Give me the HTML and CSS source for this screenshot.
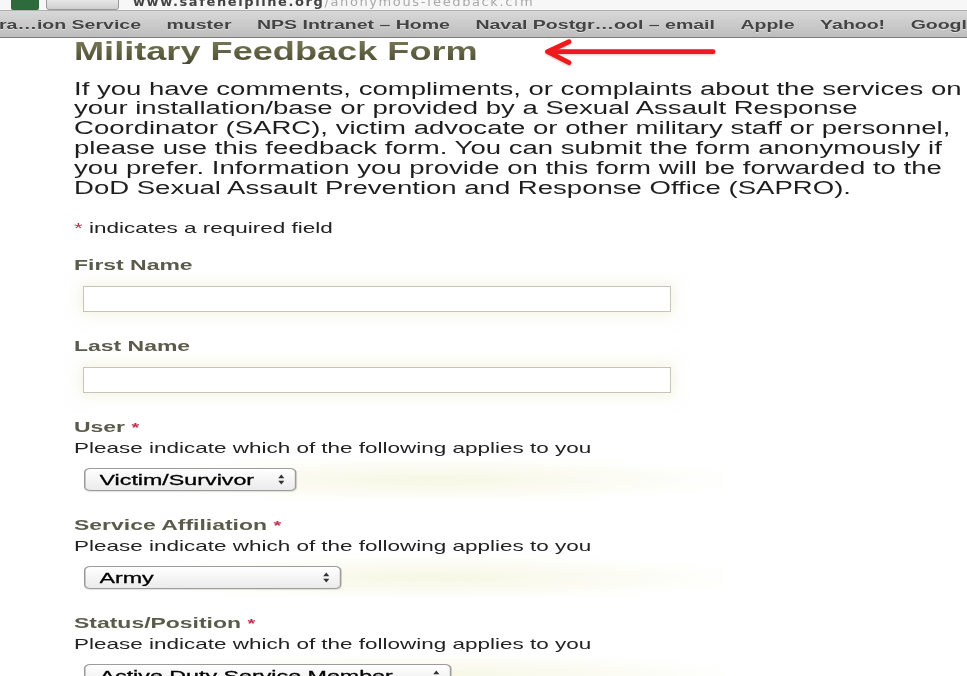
FILE: index.html
```html
<!DOCTYPE html>
<html lang="en">
<head>
<meta charset="utf-8">
<title>Military Feedback Form</title>
<link rel="stylesheet" href="styles.css">
</head>
<body>
  <header class="chrome">
    <div class="addr-strip">
      <span class="tab-icon"></span>
      <span class="nav-btns"></span>
      <span class="url"><b>www.safehelpline.org</b>/anonymous-feedback.cfm</span>
    </div>
    <nav class="bookmarks">
      <div class="bm-row">
        <span class="bm">ra…ion Service</span>
        <span class="bm">muster</span>
        <span class="bm">NPS Intranet – Home</span>
        <span class="bm">Naval Postgr…ool – email</span>
        <span class="bm">Apple</span>
        <span class="bm">Yahoo!</span>
        <span class="bm">Google</span>
      </div>
    </nav>
  </header>

  <main class="page">
    <div class="title-row">
      <h1 class="title">Military Feedback Form</h1>
      <svg class="pointer-arrow" viewBox="0 0 174 28" width="174" height="28" aria-hidden="true">
        <path d="M169 13.7 H5" stroke="#ee1a1d" stroke-width="4.8" stroke-linecap="round" fill="none"/>
        <path d="M25 3.7 L3.5 13.7 L25 24.7" stroke="#ee1a1d" stroke-width="4.8" stroke-linecap="round" stroke-linejoin="round" fill="none"/>
      </svg>
    </div>

    <p class="intro">If you have comments, compliments, or complaints about the services on<br>your installation/base or provided by a Sexual Assault Response<br>Coordinator (SARC), victim advocate or other military staff or personnel,<br>please use this feedback form. You can submit the form anonymously if<br>you prefer. Information you provide on this form will be forwarded to the<br>DoD Sexual Assault Prevention and Response Office (SAPRO).</p>

    <p class="note"><span class="req">*</span> indicates a required field</p>

    <form class="form">
      <div class="field">
        <label class="label" for="first-name">First Name</label>
        <input class="text-input" id="first-name" type="text">
      </div>

      <div class="field">
        <label class="label" for="last-name">Last Name</label>
        <input class="text-input" id="last-name" type="text">
      </div>

      <div class="field">
        <label class="label" for="user">User <span class="req req-small">*</span></label>
        <span class="hint">Please indicate which of the following applies to you</span>
        <div class="control">
          <span class="select-box">
            <select class="select select-user" id="user">
              <option>Victim/Survivor</option>
            </select>
            <svg class="updown" viewBox="0 0 7 11" width="4.6" height="11" preserveAspectRatio="none" aria-hidden="true"><path d="M0.5 4.3 L3.5 0.5 L6.5 4.3 Z M0.5 6.7 L3.5 10.5 L6.5 6.7 Z" fill="#333"/></svg>
          </span>
        </div>
      </div>

      <div class="field">
        <label class="label" for="affiliation">Service Affiliation <span class="req req-small">*</span></label>
        <span class="hint">Please indicate which of the following applies to you</span>
        <div class="control">
          <span class="select-box">
            <select class="select select-affiliation" id="affiliation">
              <option>Army</option>
            </select>
            <svg class="updown" viewBox="0 0 7 11" width="4.6" height="11" preserveAspectRatio="none" aria-hidden="true"><path d="M0.5 4.3 L3.5 0.5 L6.5 4.3 Z M0.5 6.7 L3.5 10.5 L6.5 6.7 Z" fill="#333"/></svg>
          </span>
        </div>
      </div>

      <div class="field">
        <label class="label" for="status">Status/Position <span class="req req-small">*</span></label>
        <span class="hint">Please indicate which of the following applies to you</span>
        <div class="control">
          <span class="select-box">
            <select class="select select-status" id="status">
              <option>Active Duty Service Member</option>
            </select>
            <svg class="updown" viewBox="0 0 7 11" width="4.6" height="11" preserveAspectRatio="none" aria-hidden="true"><path d="M0.5 4.3 L3.5 0.5 L6.5 4.3 Z M0.5 6.7 L3.5 10.5 L6.5 6.7 Z" fill="#333"/></svg>
          </span>
        </div>
      </div>
    </form>
  </main>
</body>
</html>
```

FILE: styles.css
```css
:root {
  --wide: 1.55;
}

html,
body {
  margin: 0;
  background: #fff;
}

body {
  font-family: "Liberation Sans", Arial, Helvetica, sans-serif;
  color: #222;
  overflow: hidden;
}

/* ---------- browser chrome ---------- */
.addr-strip {
  height: 10px;
  overflow: hidden;
  display: flex;
  align-items: flex-end;
  background: #f7f7f7;
  filter: blur(0.7px);
}

.tab-icon {
  flex: none;
  width: 28px;
  height: 16px;
  margin-left: 11px;
  background: #2d6a3c;
  border-radius: 2px;
}

.nav-btns {
  flex: none;
  width: 73px;
  height: 16px;
  margin-left: 7px;
  box-sizing: border-box;
  border: 1px solid #999;
  border-radius: 3px;
  background: linear-gradient(#f4f4f4, #cfcfcf);
}

.url {
  flex: none;
  margin-left: 14px;
  font: 13px/16px "DejaVu Sans", sans-serif;
  letter-spacing: 1.6px;
  color: #a8a8a8;
  white-space: nowrap;
}

.url b {
  color: #444;
}

.bookmarks {
  height: 26px;
  display: flex;
  align-items: center;
  overflow: hidden;
  white-space: nowrap;
  border-top: 1px solid #b0b0b0;
  border-bottom: 1px solid #7c7c7c;
  background: linear-gradient(#d8d8d8, #bdbdbd);
}

.bm-row {
  display: flex;
  gap: 17px;
  width: max-content;
  margin-left: -1px;
  transform: scaleX(1.5);
  transform-origin: 0 50%;
}

.bm {
  flex: none;
  font: bold 13px/1 "Liberation Sans", Arial, sans-serif;
  color: #444;
  text-shadow: 0 1px 0 rgba(255, 255, 255, 0.45);
}

/* ---------- page ---------- */
.page {
  padding-left: 74px;
}

.title-row {
  position: relative;
}

.title {
  display: block;
  width: max-content;
  margin: 0;
  font-size: 26px;
  line-height: 26px;
  font-weight: bold;
  color: #5e5e3d;
  background: linear-gradient(#7d7d5c, #4a4a30);
  -webkit-background-clip: text;
  background-clip: text;
  -webkit-text-fill-color: transparent;
  white-space: nowrap;
  transform: scaleX(1.39);
  transform-origin: 0 0;
}

.pointer-arrow {
  position: absolute;
  left: 470px;
  top: 0;
  filter: drop-shadow(0 1px 1px rgba(120, 0, 0, 0.25));
}

.intro {
  width: max-content;
  margin: 15.6px 0 0;
  font-size: 17.6px;
  line-height: 19.8px;
  color: #1e1e1e;
  white-space: nowrap;
  transform: scaleX(1.565);
  transform-origin: 0 0;
}

.note {
  width: max-content;
  margin: 20px 0 0;
  font-size: 14.5px;
  line-height: 20px;
  color: #222;
  transform: scaleX(var(--wide));
  transform-origin: 0 0;
}

.req {
  color: #c42a4a;
}

.req-small {
  font-size: 13px;
}

/* ---------- form ---------- */
.form {
  margin-top: 17px;
}

.field {
  margin-bottom: 24px;
}

.label {
  display: block;
  width: max-content;
  font-size: 15px;
  line-height: 20px;
  font-weight: bold;
  color: #5b5b4b;
  transform: scaleX(1.53);
  transform-origin: 0 0;
}

.hint {
  display: block;
  width: max-content;
  font-size: 14.5px;
  line-height: 20px;
  color: #222;
  transform: scaleX(var(--wide));
  transform-origin: 0 0;
}

.text-input {
  display: block;
  box-sizing: border-box;
  width: 588px;
  height: 26px;
  margin: 11px 0 0 9px;
  padding: 0;
  border: 1px solid #c5c5b9;
  background: #fff;
  box-shadow: 0 0 14px 3px rgba(236, 236, 205, 0.5);
}

.control {
  display: flex;
  width: 640px;
  height: 23px;
  margin: 2px 0 -8px;
  padding: 8px 0 8px 10px;
  background: radial-gradient(ellipse 50% 60% at 55% 50%, rgba(244, 244, 220, 0.75), rgba(244, 244, 220, 0) 100%);
}

.select-box {
  position: relative;
  display: inline-block;
  height: 23px;
  transform: scaleX(var(--wide));
  transform-origin: 0 0;
}

.select {
  -webkit-appearance: none;
  appearance: none;
  display: block;
  box-sizing: border-box;
  height: 23px;
  margin: 0;
  padding: 0 0 0 9px;
  border: 1px solid #9c9c9c;
  border-radius: 4px;
  background: linear-gradient(#ffffff, #ebebeb);
  box-shadow: 0 1px 1px rgba(0, 0, 0, 0.12);
  font-family: "Liberation Sans", Arial, sans-serif;
  font-size: 15px;
  color: #000;
  -webkit-text-stroke: 0.3px #000;
}

.select-user {
  width: 137px;
}

.select-affiliation {
  width: 166px;
}

.select-status {
  width: 237px;
}

.updown {
  position: absolute;
  right: 7px;
  top: 6px;
  pointer-events: none;
}
```
